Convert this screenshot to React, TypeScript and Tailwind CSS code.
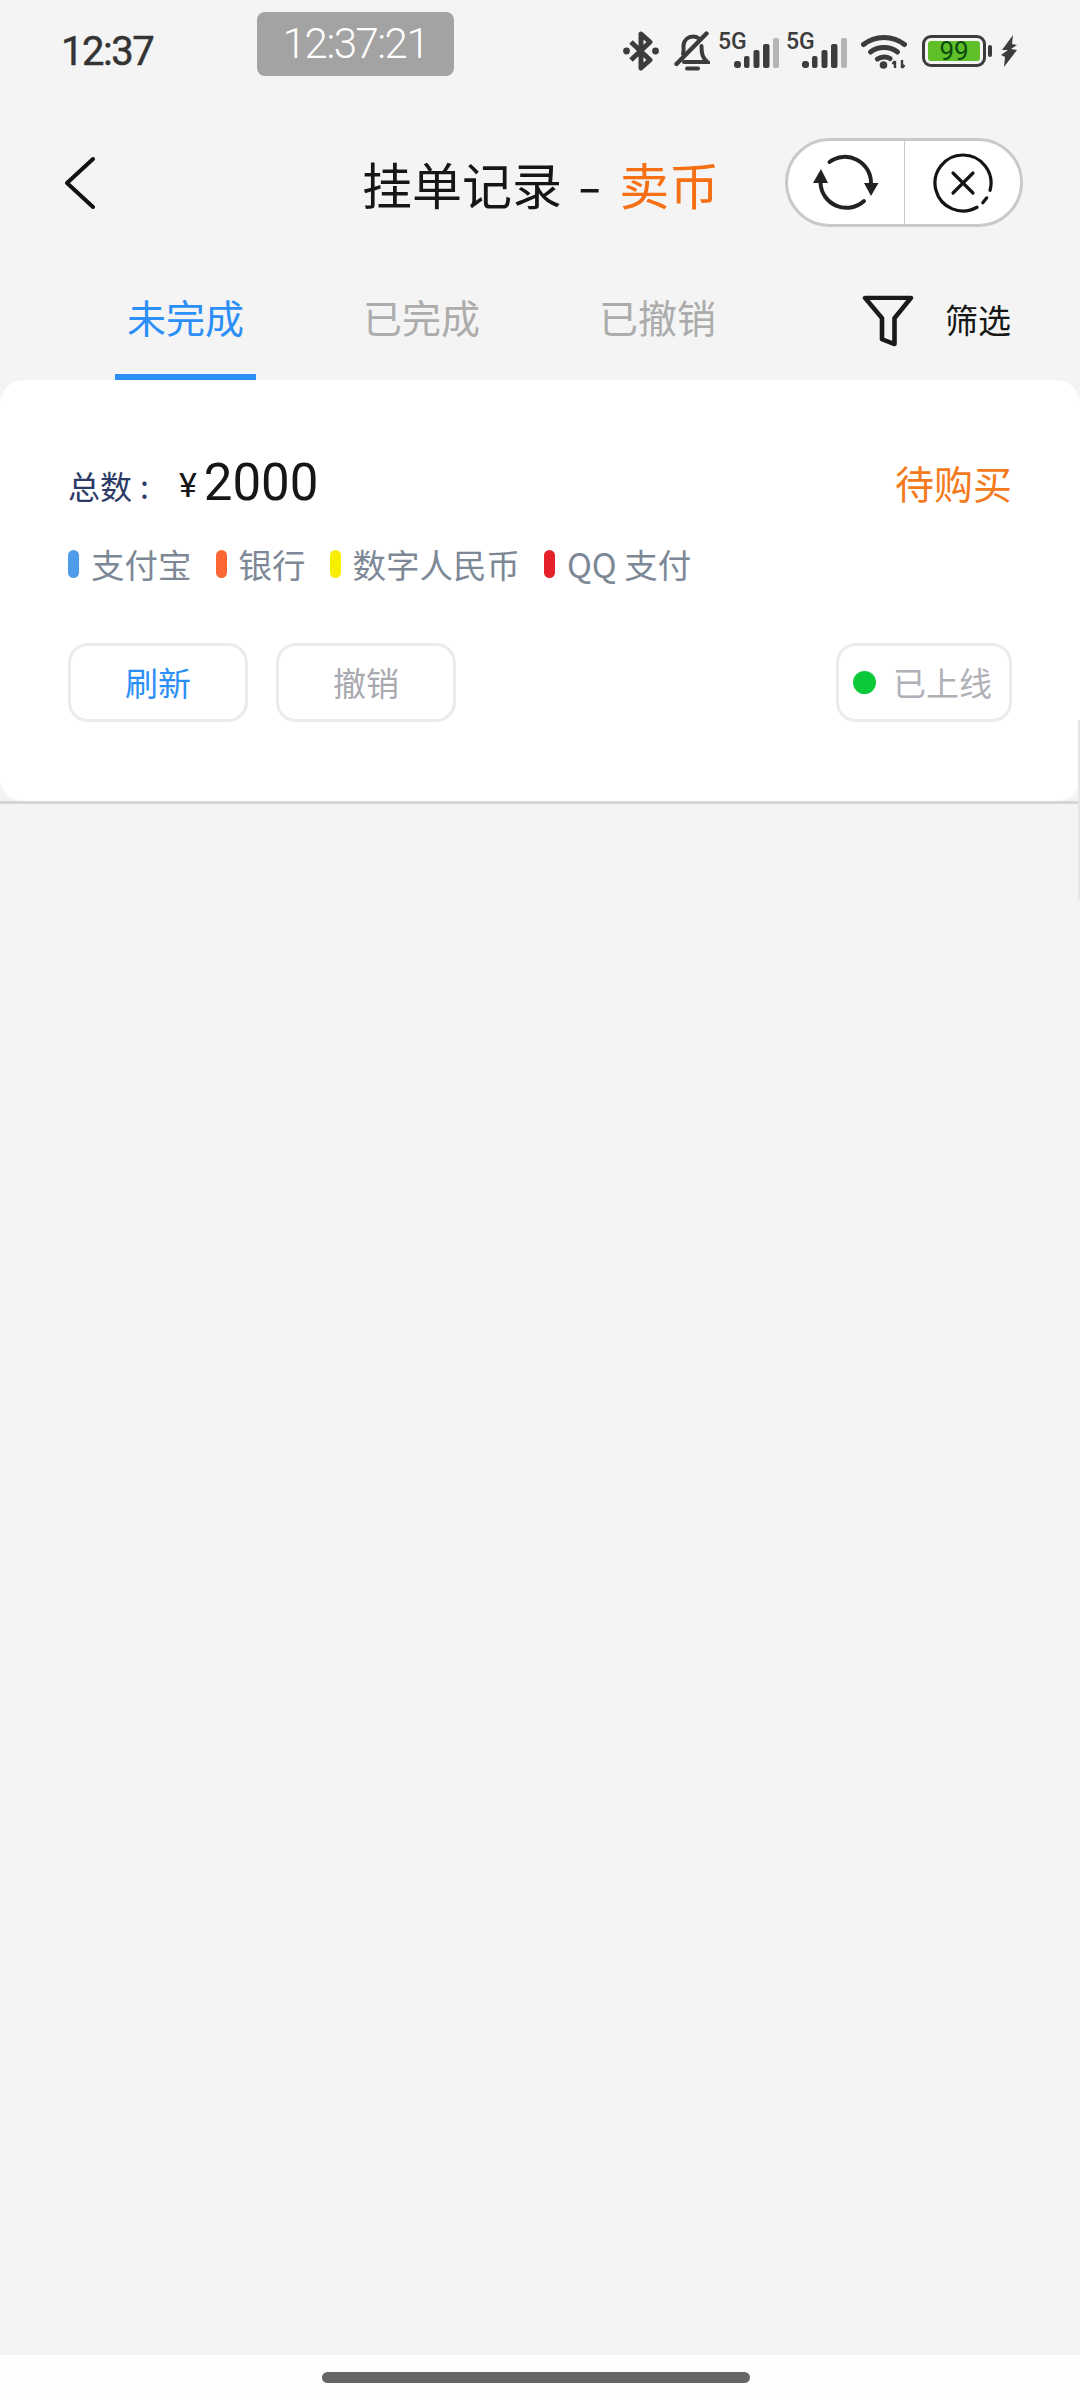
import React from "react";

const cjk = "font-['Noto_Sans_CJK_SC','Noto_Sans',sans-serif]";

const Bluetooth = () => (
  <svg width="36" height="40" viewBox="0 0 36 40" fill="none" stroke="#3c3c3c" strokeWidth="5" strokeLinejoin="round">
    <path d="M8 11 L27 29 L18 37 V3 L27 11 L8 29" />
    <circle cx="3.500" cy="20" r="3.400" fill="#3c3c3c" stroke="none" />
    <circle cx="32.500" cy="20" r="3.400" fill="#3c3c3c" stroke="none" />
  </svg>
);

const BellOff = () => (
  <svg width="36" height="40" viewBox="0 0 36 40" fill="none" stroke="#3c3c3c" strokeWidth="4" strokeLinecap="round">
    <path d="M9 23 C10 20 9.500 17 9.500 14 C10 9 14 5.500 19 5.500 C21 5.500 23 6 25 7.500" />
    <path d="M27.500 15 C27.500 23 28.500 27 33.500 31 H10" />
    <path d="M2.500 33 L32.500 2.500" strokeWidth="4.400" />
    <path d="M13 37.500 H24" />
  </svg>
);

const Signal = () => (
  <div className="relative w-[61px] h-[34px] shrink-0">
    <span className="absolute left-0 top-0 text-[23px] leading-[16px] font-medium text-[#3c3c3c] font-['Roboto',sans-serif]">5G</span>
    <svg className="absolute right-0 bottom-0" width="45" height="30" viewBox="0 0 45 30" fill="#3c3c3c">
      <rect x="0" y="23" width="7" height="7" rx="3" />
      <rect x="10" y="18" width="5.500" height="12" rx="2" />
      <rect x="19.500" y="12" width="6" height="18" rx="2" />
      <rect x="29" y="6" width="6.500" height="24" rx="2" />
      <rect x="39" y="0" width="6" height="30" rx="2" fill="#b4b4b4" />
    </svg>
  </div>
);

const Wifi = () => (
  <svg width="46" height="35" viewBox="0 0 46 35" fill="none" stroke="#3c3c3c" strokeLinecap="round" strokeWidth="5">
    <path d="M2.500 10.500 C14 1 32 1 43.500 10.500" />
    <path d="M9.500 18 C17 12 29 12 36.500 18" />
    <path d="M16.500 25 C20 22.500 26 22.500 29 24.500" />
    <circle cx="22.500" cy="31" r="3.800" fill="#3c3c3c" stroke="none" />
    <path d="M34 27 V34 M31.500 30 L34 27 M41 26 V34 M41 34 L43.500 31" strokeWidth="2.400" strokeLinecap="butt" />
  </svg>
);

const Bolt = () => (
  <svg width="17" height="32" viewBox="0 0 17 32" fill="#3c3c3c">
    <path d="M12 0 L1 15 L7 15 L0 20 L4 22 L3 32 L16 15 L10 14 L16 10 L11 9 Z" />
  </svg>
);

const RefreshIcon = () => (
  <svg width="66" height="58" viewBox="0 0 66 58" fill="none" stroke="#222" strokeWidth="4" strokeLinecap="round">
    <path d="M16.500 8 A26 26 0 0 1 58 29" />
    <path d="M51 47 A26 26 0 0 1 7.500 29" />
    <path d="M51 29 H65.500 L58 42 Z" fill="#222" stroke="none" />
    <path d="M0 29 H15 L8 15 Z" fill="#222" stroke="none" />
  </svg>
);

const CloseIcon = () => (
  <svg width="60" height="60" viewBox="0 0 60 60" fill="none" stroke="#141414" strokeWidth="3.200" strokeLinecap="round">
    <path d="M44 54.250 A28 28 0 1 1 57.050 37.250" />
    <path d="M53.750 44.840 L49.800 49.800" />
    <path d="M20 20 L40 40 M40 20 L20 40" />
  </svg>
);

const FilterIcon = () => (
  <svg width="52" height="52" viewBox="0 0 52 54" preserveAspectRatio="none" fill="none" stroke="#1a1a1a" strokeWidth="4.600" strokeLinejoin="round">
    <path d="M3 3 H49 L32.500 24 V51 L20 46 V24 Z" />
  </svg>
);

const pays = [
  { name: "支付宝", color: "bg-[#4f9ceb]" },
  { name: "银行", color: "bg-[#fb6632]" },
  { name: "数字人民币", color: "bg-[#f8ee00]" },
  { name: "QQ 支付", color: "bg-[#e5212b]" },
];

export default function App() {
  return (
    <div className={`relative w-[1080px] h-[2400px] flex flex-col bg-[#f4f4f4] overflow-hidden ${cjk}`}>
      {/* status bar */}
      <div className="relative h-[125px] shrink-0 flex items-start pt-[31px] pl-[61px] pr-[62px]">
        <span className="text-[40px] leading-[40px] text-[#333] [-webkit-text-stroke:0.5px_#333] tracking-[-1.5px] font-['Roboto',sans-serif] mt-[1px]">12:37</span>
        <div className="absolute left-[257px] top-[12px] w-[197px] h-[64px] rounded-[8px] bg-[#a3a3a3] flex items-center justify-center">
          <span className="text-[42px] leading-[44px] font-light tracking-[-1.500px] text-white font-['Roboto',sans-serif]">12:37:21</span>
        </div>
        <div className="ml-auto flex items-center h-[40px]">
          <Bluetooth />
          <div className="ml-[15px]"><BellOff /></div>
          <div className="ml-[8px]"><Signal /></div>
          <div className="ml-[7px]"><Signal /></div>
          <div className="ml-[14px]"><Wifi /></div>
          <div className="ml-[15px] w-[64px] h-[32px] rounded-[9px] border-[3.500px] border-[#3c3c3c] p-[3px]">
            <div className="w-full h-full rounded-[3px] bg-[#5fc02a] flex items-center justify-center text-[26px] leading-none text-[#0d4a0d] font-['Roboto',sans-serif]">99</div>
          </div>
          <div className="ml-[2px] w-[4px] h-[12px] rounded-full bg-[#3c3c3c]"></div>
          <div className="ml-[9px]"><Bolt /></div>
        </div>
      </div>

      {/* header */}
      <div className="h-[115px] shrink-0 flex items-center pl-[65px] pr-[57px]">
        <svg width="30" height="52" viewBox="0 0 30 52" fill="none" stroke="#111" strokeWidth="4" strokeLinecap="round" strokeLinejoin="round">
          <path d="M28 2 L2 26 L28 50" />
        </svg>
        <div className="ml-[267px] text-[50px] leading-[60px] text-[#161616] whitespace-nowrap">
          挂单记录<span className="inline-block ml-[19px] mr-[21px] scale-x-[1.4]">-</span><span className="text-[#f56f14]">卖币</span>
        </div>
        <div className="ml-auto w-[238px] h-[89px] rounded-full border-[3px] border-[#c9c9c9] bg-white flex">
          <div className="w-[117px] flex items-center justify-center border-r border-[#c9c9c9]"><RefreshIcon /></div>
          <div className="flex-1 flex items-center justify-center"><CloseIcon /></div>
        </div>
      </div>

      {/* tabs */}
      <div className="h-[140px] shrink-0 flex pl-[115px] pr-[69px] gap-[95px]">
        <div className="w-[141px] flex flex-col items-center justify-between">
          <span className="mt-[53px] text-[39px] leading-[46px] text-[#2b8ff7]">未完成</span>
          <div className="w-full h-[6px] bg-[#2b8ff7]"></div>
        </div>
        <div className="w-[141px] flex justify-center">
          <span className="mt-[53px] text-[39px] leading-[46px] text-[#acacac]">已完成</span>
        </div>
        <div className="w-[141px] flex justify-center">
          <span className="mt-[53px] text-[39px] leading-[46px] text-[#acacac]">已撤销</span>
        </div>
        <div className="ml-auto flex items-start pt-[55px]">
          <FilterIcon />
          <span className="ml-[31px] mt-[4px] text-[33px] leading-[40px] text-[#161616] whitespace-nowrap">筛选</span>
        </div>
      </div>

      {/* order card */}
      <div className="shrink-0 border-b-[3px] border-[#d6d6d6]">
        <div className="h-[421px] rounded-[24px] bg-white pt-[75px] pl-[68px] pr-[68px]">
          <div className="flex items-center justify-between h-[56px]">
            <div className="flex items-center">
              <span className="text-[32px] leading-[40px] text-[#2c3a66] mt-[4px]">总数<span className="ml-[8px]">:</span></span>
              <span className="ml-[30px] text-[34px] leading-[40px] text-[#161616] mt-[4px] font-['Roboto',sans-serif]">¥</span>
              <span className="ml-[7px] text-[51px] leading-[56px] text-[#161616] font-['Roboto',sans-serif]">2000</span>
            </div>
            <span className="text-[39px] leading-[46px] text-[#f47a20] -mt-[3px]">待购买</span>
          </div>

          <div className="mt-[33px] flex items-center h-[40px]">
            {pays.map((p) => (
              <div key={p.name} className="flex items-center mr-[24px]">
                <div className={`w-[11px] h-[28px] rounded-full ${p.color}`}></div>
                <span className="ml-[12px] text-[33.500px] leading-[40px] text-[#7d8896] whitespace-nowrap">{p.name}</span>
              </div>
            ))}
          </div>

          <div className="mt-[59px] flex items-center">
            <button className="w-[180px] h-[79px] rounded-[20px] border-[3px] border-[#ebebeb] pb-[2px] text-[33px] leading-[40px] text-[#2b8ff7]">刷新</button>
            <button className="ml-[28px] w-[180px] h-[79px] rounded-[20px] border-[3px] border-[#ebebeb] pb-[2px] text-[33px] leading-[40px] text-[#a9a9b0]">撤销</button>
            <div className="ml-auto w-[176px] h-[79px] rounded-[20px] border-[3px] border-[#ebebeb] flex items-center pl-[14px]">
              <div className="w-[23px] h-[23px] rounded-full bg-[#0cc93a]"></div>
              <span className="ml-[17px] pb-[2px] text-[33px] leading-[40px] text-[#b0b0b8] whitespace-nowrap">已上线</span>
            </div>
          </div>
        </div>
      </div>

      <div className="flex-1"></div>

      {/* gesture bar */}
      <div className="h-[45px] shrink-0 bg-[#fdfdfd] flex justify-center pt-[17px] pr-[8px]">
        <div className="w-[428px] h-[11px] rounded-full bg-[#666]"></div>
      </div>

      {/* faint line on the right edge */}
      <div className="absolute right-0 top-[720px] w-[2px] h-[180px] bg-[#e6e6e6]"></div>
    </div>
  );
}
